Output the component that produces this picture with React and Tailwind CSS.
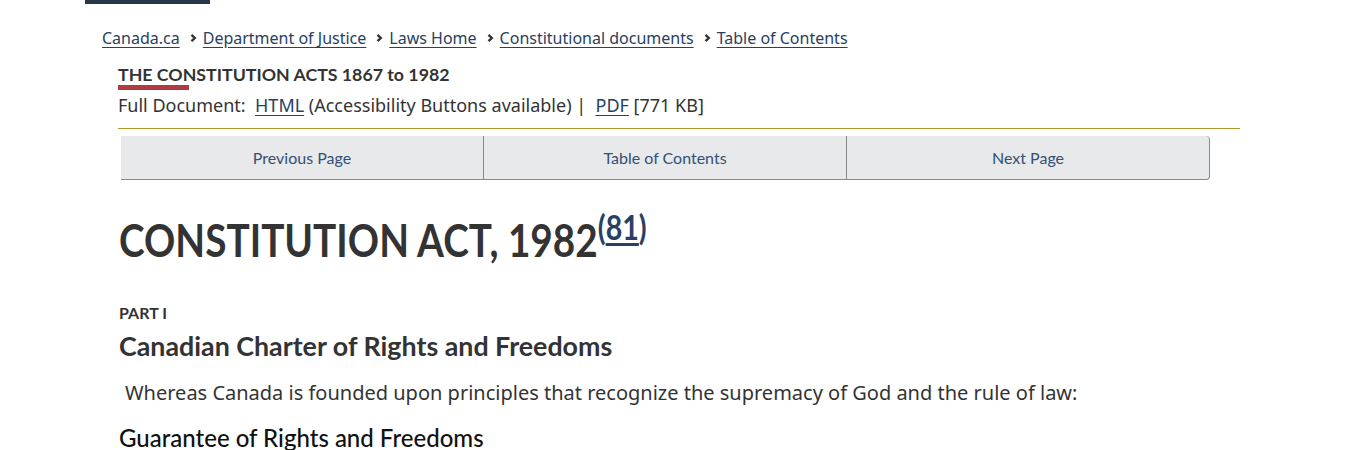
import React from "react";

const crumbs = [
  "Canada.ca",
  "Department of Justice",
  "Laws Home",
  "Constitutional documents",
  "Table of Contents",
];

const Chevron = () => (
  <svg width="7" height="10" viewBox="0 0 7 10" className="ml-[10px] mr-[6px] shrink-0">
    <path d="M1.5 1.8 L4.8 5 L1.5 8.2" fill="none" stroke="#333" strokeWidth="2.4" />
  </svg>
);

const NavButton = ({ label, last }) => (
  <a
    href="#"
    className={`flex-1 flex items-center justify-center h-full text-[16px] text-[#335075] ${
      last ? "" : "border-r border-[#8a8a8a]"
    }`}
  >
    {label}
  </a>
);

const App = () => {
  const lato = { fontFamily: "Lato, 'Noto Sans', sans-serif" };
  return (
    <div
      className="min-h-[450px] bg-white text-[#333] overflow-hidden"
      style={{ fontFamily: "'Noto Sans', 'Open Sans', sans-serif" }}
    >
      {/* top bar stub */}
      <div className="ml-[85px] w-[125px] h-[4px] bg-[#26374a]" />

      {/* Breadcrumb */}
      <nav className="pl-[102px] mt-[22px] flex items-center text-[16px] leading-[24px]">
        {crumbs.map((c, i) => (
          <span key={c} className="flex items-center">
            {i > 0 && <Chevron />}
            <a href="#" className="text-[#284162] underline underline-offset-[3px]">
              {c}
            </a>
          </span>
        ))}
      </nav>

      <div className="ml-[118px] w-[1122px]">
        {/* Document title */}
        <div className="mt-[12px]">
          <h2 className="text-[17.75px] leading-[24px] font-bold text-[#333]" style={lato}>
            THE CONSTITUTION ACTS 1867 to 1982
          </h2>
          <div className="w-[71px] h-[5px] bg-[#af3c43] -mt-[1px]" />
        </div>
        <p className="text-[18px] leading-[27px] mt-[2px]">
          Full Document:&nbsp;{" "}
          <a href="#" className="text-[#284162] underline underline-offset-[3px]">HTML</a>{" "}
          (Accessibility Buttons available) |&nbsp;{" "}
          <a href="#" className="text-[#284162] underline underline-offset-[3px]">PDF</a>{" "}
          [771 KB]
        </p>
        <div className="mt-[9px] h-px bg-[#b8962e]" />

        {/* Page navigation */}
        <div
          className="ml-[3px] mt-[7px] w-[1089px] h-[44px] flex bg-[#e8e9eb] border-b border-r border-[#8a8a8a] rounded-r-[4px]"
          style={lato}
        >
          <NavButton label="Previous Page" />
          <NavButton label="Table of Contents" />
          <NavButton label="Next Page" last />
        </div>

        {/* Content */}
        <h1
          className="mt-[34px] ml-[1px] text-[46px] leading-[52px] font-bold text-[#333] whitespace-nowrap origin-left scale-x-[0.842]"
          style={lato}
        >
          CONSTITUTION ACT, 1982
          <sup className="text-[34px] font-bold leading-[0]">
            <a href="#" className="text-[#284162]">
              (<span className="underline underline-offset-[3px]">81</span>)
            </a>
          </sup>
        </h1>

        <h3 className="mt-[37px] ml-[1px] text-[16px] leading-[20px] font-bold text-[#333]" style={lato}>
          PART I
        </h3>
        <h2 className="mt-[7px] ml-[1px] text-[26.8px] leading-[32px] font-bold text-[#333]" style={lato}>
          Canadian Charter of Rights and Freedoms
        </h2>
        <p className="mt-[16px] ml-[7px] text-[20px] leading-[30px]">
          Whereas Canada is founded upon principles that recognize the supremacy of God and the rule of law:
        </p>
        <h4 className="mt-[15px] ml-[1px] text-[24px] leading-[30px] font-medium text-[#111]" style={lato}>
          Guarantee of Rights and Freedoms
        </h4>
      </div>
    </div>
  );
};

export default App;
